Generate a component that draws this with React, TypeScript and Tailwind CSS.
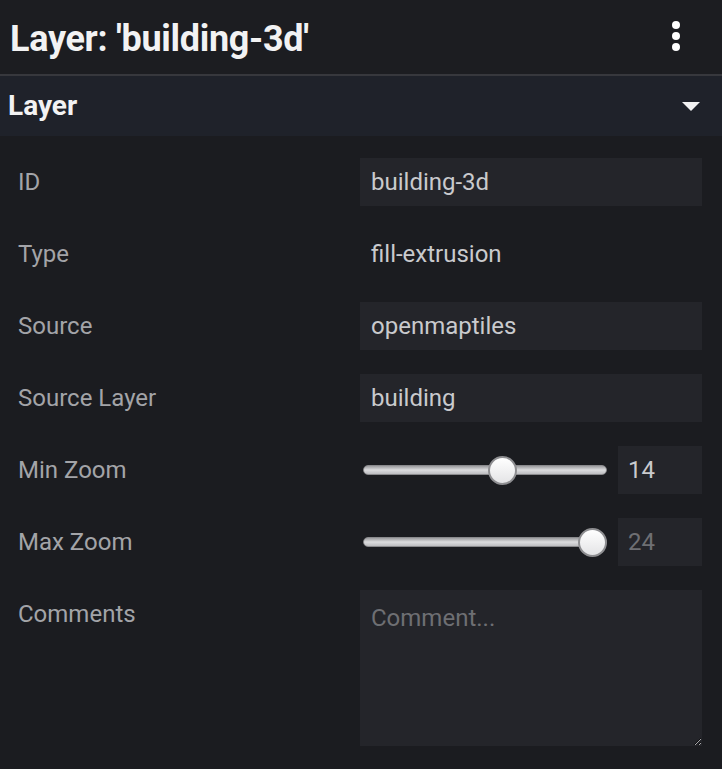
import React from 'react';

const font = { fontFamily: 'Roboto, "Liberation Sans", sans-serif' };

function Row({ label, children }: { label: string; children: React.ReactNode }) {
  return (
    <div className="flex items-center h-[72px]">
      <div className="w-[360px] pl-[18px] text-[24px] text-[#a3a4a8]">{label}</div>
      <div className="flex-1 pr-[20px]">{children}</div>
    </div>
  );
}

function Slider({ value, disabled }: { value: number; disabled?: boolean }) {
  const pct = (value / 24) * 100;
  return (
    <div className="flex items-center gap-[11px]">
      <div className="relative w-[244px] h-[30px] ml-[4px]">
        <div className="absolute left-0 right-0 top-[10px] h-[10px] rounded-full bg-gradient-to-b from-[#9c9c9f] via-[#dcdcde] to-[#bdbdc0] border border-[#8a8a8d]" />
        <div
          className="absolute top-[1px] w-[29px] h-[29px] rounded-full bg-gradient-to-b from-white to-[#e4e4e6] border-2 border-[#8e8e91]"
          style={{ left: `calc(${pct}% * (244 - 29) / 244)` }}
        />
      </div>
      <div
        className={`w-[84px] h-[48px] bg-[#24252a] flex items-center pl-[10px] text-[24px] ${
          disabled ? 'text-[#6e6f73]' : 'text-[#c9cacd]'
        }`}
      >
        {value}
      </div>
    </div>
  );
}

export default function App() {
  return (
    <div className="w-[722px] h-[769px] bg-[#1b1c20] overflow-hidden" style={font}>
      {/* Header */}
      <div className="h-[74px] bg-[#1c1d21] flex items-center justify-between pl-[10px] pr-[42px]">
        <h1 className="text-[36px] font-bold text-[#f2f2f3] tracking-[-0.3px] leading-none mt-[3px]">Layer: 'building-3d'</h1>
        <div className="flex flex-col gap-[3px] -mt-[2px]">
          <span className="w-[8px] h-[8px] rounded-full bg-white" />
          <span className="w-[8px] h-[8px] rounded-full bg-white" />
          <span className="w-[8px] h-[8px] rounded-full bg-white" />
        </div>
      </div>
      <div className="h-[2px] bg-[#37383d]" />

      {/* Section header */}
      <div className="h-[60px] bg-[#1f222a] flex items-center justify-between pl-[8px] pr-[22px]">
        <span className="text-[28px] font-bold text-[#f2f2f3]">Layer</span>
        <svg width="18" height="9" viewBox="0 0 18 9">
          <polygon points="0,0 18,0 9,9" fill="#f2f2f3" />
        </svg>
      </div>

      {/* Fields */}
      <div className="pt-[10px]">
        <Row label="ID">
          <div className="h-[48px] bg-[#24252a] flex items-center pl-[11px] text-[24px] text-[#c9cacd]">building-3d</div>
        </Row>
        <Row label="Type">
          <div className="h-[48px] flex items-center pl-[11px] text-[24px] text-[#c9cacd]">fill-extrusion</div>
        </Row>
        <Row label="Source">
          <div className="h-[48px] bg-[#24252a] flex items-center pl-[11px] text-[24px] text-[#c9cacd]">openmaptiles</div>
        </Row>
        <Row label="Source Layer">
          <div className="h-[48px] bg-[#24252a] flex items-center pl-[11px] text-[24px] text-[#c9cacd]">building</div>
        </Row>
        <Row label="Min Zoom">
          <Slider value={14} />
        </Row>
        <Row label="Max Zoom">
          <Slider value={24} disabled />
        </Row>
        <div className="flex pt-[12px]">
          <div className="w-[360px] pl-[18px] pt-[6px] text-[24px] text-[#a3a4a8]">Comments</div>
          <div className="flex-1 pr-[20px]">
            <textarea
              placeholder="Comment..."
              className="w-full h-[156px] bg-[#24252a] text-[24px] text-[#c9cacd] placeholder-[#6e6f73] px-[11px] pt-[10px] outline-none resize-y block"
            />
          </div>
        </div>
      </div>
    </div>
  );
}
